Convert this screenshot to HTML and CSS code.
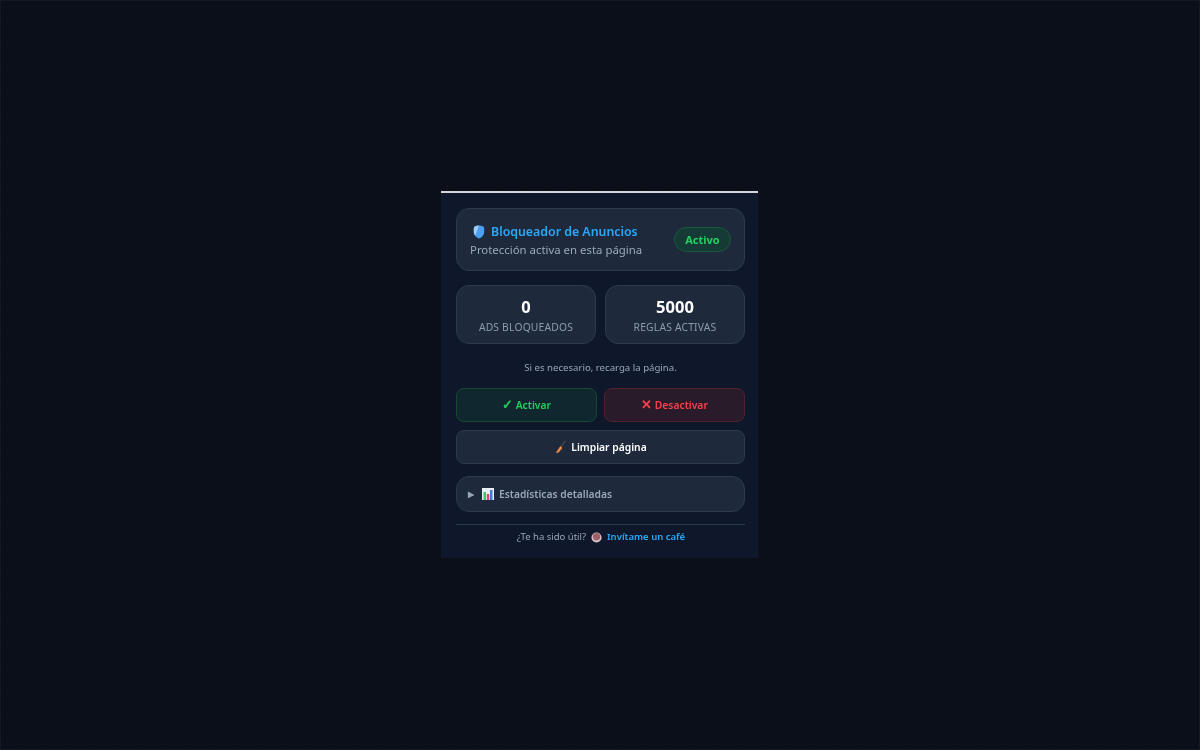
FILE: index.html
```html
<!DOCTYPE html>
<html lang="es">
<head>
<meta charset="utf-8">
<title>Bloqueador de Anuncios</title>
<link rel="stylesheet" href="styles.css">
</head>
<body>
<main class="popup">
  <section class="card header">
    <div class="header-text">
      <h1 class="title">
        <svg class="icon-shield" viewBox="0 0 12 14"><path d="M6 .5C9 .5 11.200 1.500 11.200 3V7C11.200 10.300 9 12.500 6 13.500 3 12.500.8 10.300.8 7V3C.8 1.500 3 .5 6 .5Z" fill="#4a9ff0"/><path d="M6 .5C3 .5.8 1.500.8 3V7C.8 8.500 1.300 9.500 2.200 10.500L6 .8Z" fill="#9ccff8"/></svg>
        <span>Bloqueador de Anuncios</span>
      </h1>
      <p class="subtitle">Protección activa en esta página</p>
    </div>
    <span class="badge">Activo</span>
  </section>
  <section class="stats">
    <div class="card stat"><strong>0</strong><span>ADS BLOQUEADOS</span></div>
    <div class="card stat"><strong>5000</strong><span>REGLAS ACTIVAS</span></div>
  </section>
  <p class="note">Si es necesario, recarga la página.</p>
  <div class="actions">
    <button class="btn on"><span class="mark">✓</span> Activar</button>
    <button class="btn off"><span class="mark">✕</span> Desactivar</button>
  </div>
  <button class="btn clean">
    <svg class="icon-broom" viewBox="0 0 12 14"><path d="M11 .5 6.500 7" stroke="#6b5a55" stroke-width="1" fill="none"/><path d="M6 6 8 8 4 13 .8 13.500C2.500 11.500 4 8.500 6 6Z" fill="#f0883e"/></svg>
    <span>Limpiar página</span>
  </button>
  <div class="card details">
    <span class="arrow">▶</span>
    <svg class="icon-chart" viewBox="0 0 12 12"><rect width="12" height="12" fill="#e8eef2"/><rect x="1.500" y="4" width="2.500" height="8" fill="#3ec46d"/><rect x="4.800" y="6" width="2.500" height="6" fill="#e83e8c"/><rect x="8" y="2" width="2.500" height="10" fill="#3b7dd8"/></svg>
    <span>Estadísticas detalladas</span>
  </div>
  <footer class="footer">
    <span>¿Te ha sido útil?</span>
    <svg class="icon-cup" viewBox="0 0 12 12"><circle cx="6" cy="6" r="5.500" fill="#dcc4c6"/><circle cx="6" cy="5.200" r="4" fill="#a0606a"/></svg>
    <a class="link">Invítame un café</a>
  </footer>
</main>
</body>
</html>
```
FILE: styles.css
```css
* { box-sizing: border-box; }
html, body { height: 100%; }
body {
  margin: 0;
  background-color: #0a0e17;
  background-image:
    linear-gradient(90deg, #0b101a 1px, transparent 1px),
    linear-gradient(#0b101a 1px, transparent 1px);
  background-size: 3px 3px;
  border: 1px solid #131a26;
  display: flex;
  justify-content: center;
  align-items: flex-start;
  padding: 190px 1px 0 0;
  font-family: "Noto Sans", "Open Sans", sans-serif;
}
.popup {
  width: 317px;
  height: 367px;
  background: #0f172a;
  border-top: 2px solid #d4d6da;
  padding: 15px 13px 0 15px;
  display: flex;
  flex-direction: column;
  filter: blur(0.4px);
}
.card {
  background: #1e293b;
  border: 1px solid #2e3b4e;
  border-radius: 13px;
}
.header {
  height: 63px;
  display: flex;
  align-items: center;
  justify-content: space-between;
  padding: 0 13px;
}
.header-text { padding-top: 1px; }
.title {
  margin: 0;
  display: flex;
  align-items: center;
  gap: 6px;
  padding-left: 3px;
  font-size: 12.350px;
  line-height: 18px;
  font-weight: 600;
  color: #2aa8f8;
}
.icon-shield { width: 12px; height: 14px; }
.subtitle {
  margin: 1px 0 0;
  font-size: 11.400px;
  line-height: 16px;
  color: #9aa8bc;
}
.badge {
  width: 57px;
  height: 25px;
  display: flex;
  align-items: center;
  justify-content: center;
  border: 1px solid #175a3a;
  border-radius: 13px;
  background: #163b36;
  color: #22d060;
  font-size: 11px;
  font-weight: 700;
}
.stats {
  margin-top: 14px;
  display: grid;
  grid-template-columns: 140px 140px;
  gap: 9px;
}
.stat {
  height: 59px;
  display: flex;
  flex-direction: column;
  align-items: center;
  justify-content: center;
  color: #8c9cb0;
  font-size: 10.300px;
  letter-spacing: 0.2px;
  line-height: 14px;
}
.stat strong {
  color: #ffffff;
  font-size: 16.500px;
  line-height: 22px;
  font-weight: 700;
  letter-spacing: 0;
  margin-bottom: 2px;
}
.note {
  margin: 17px 0 0;
  height: 14px;
  text-align: center;
  font-size: 9.650px;
  line-height: 14px;
  color: #98a6ba;
}
.actions {
  margin-top: 13px;
  display: grid;
  grid-template-columns: 141px 141px;
  gap: 7px;
}
.btn {
  height: 34px;
  border-radius: 8px;
  border: 1px solid;
  font-family: inherit;
  font-size: 10.300px;
  font-weight: 600;
  padding: 0;
}
.mark { font-size: 13px; font-weight: 700; line-height: 1; }
.on { background: #11272f; border-color: #134a30; color: #22d060; }
.off { background: #2a1b2a; border-color: #52202e; color: #f8404c; }
.clean {
  margin-top: 8px;
  background: #1e293b;
  border-color: #2e3b4e;
  color: #ffffff;
  display: flex;
  align-items: center;
  justify-content: center;
  gap: 5px;
  padding-left: 1px;
}
.icon-broom { width: 11px; height: 14px; }
.details {
  margin-top: 12px;
  height: 36px;
  display: flex;
  align-items: center;
  padding-left: 11px;
  font-size: 10.250px;
  font-weight: 600;
  color: #98a6ba;
}
.arrow { font-size: 8px; width: 14px; line-height: 1; }
.icon-chart { width: 12px; height: 12px; margin-right: 5px; }
.footer {
  margin-top: 12px;
  border-top: 1px solid #2e3b4e;
  padding-top: 5px;
  padding-left: 1px;
  display: flex;
  justify-content: center;
  align-items: center;
  gap: 5px;
  font-size: 9.500px;
  line-height: 14px;
  color: #98a6ba;
}
.icon-cup { width: 11px; height: 11px; }
.link { color: #2aa8f8; font-weight: 600; }
```
